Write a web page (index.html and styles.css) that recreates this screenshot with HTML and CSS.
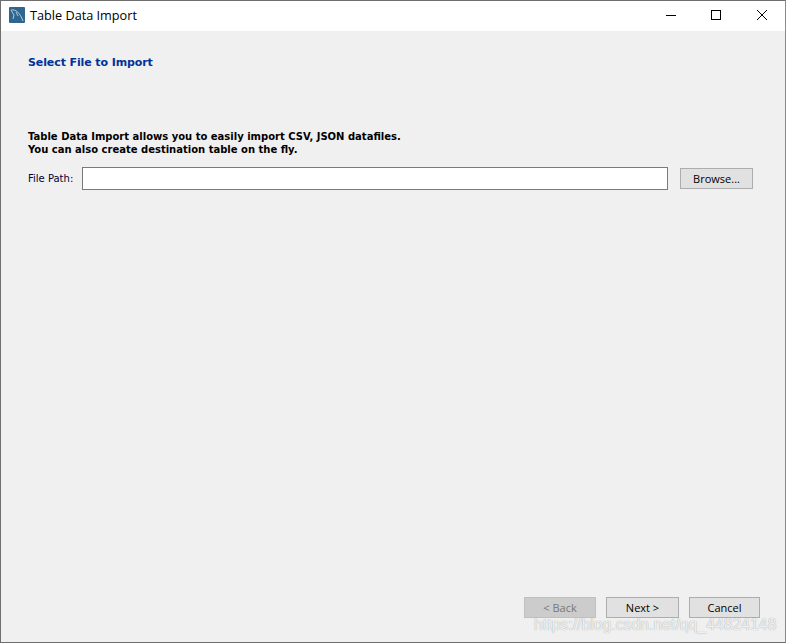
FILE: index.html
```html
<!DOCTYPE html>
<html lang="en-US">

<head>
    <meta charset="UTF-8">
    <meta name="viewport" content="width=device-width, initial-scale=1.0">
    <title>Table Data Import</title>
    <link rel="stylesheet" href="styles.css">
</head>

<body>
    <div class="window">
        <div class="titlebar">
            <svg class="app-icon" width="16" height="16" viewBox="0 0 16 16">
                <rect width="16" height="16" rx="1" fill="#2f6690" />
                <path d="M2 3 C7 2 11 6 14 14 M2 3 L5 8 L4 12 M7 5 L9 9" fill="none" stroke="#b4c8d8" stroke-width="1" />
            </svg>
            <span class="title-text">Table Data Import</span>
            <div class="window-controls">
                <svg class="control" width="46" height="30" viewBox="0 0 46 30">
                    <path d="M19 14.5 H29" stroke="#000" stroke-width="1" />
                </svg>
                <svg class="control" width="46" height="30" viewBox="0 0 46 30">
                    <rect x="18.5" y="9.5" width="9" height="9" fill="none" stroke="#000" stroke-width="1" />
                </svg>
                <svg class="control" width="46" height="30" viewBox="0 0 46 30">
                    <path d="M18 9 L28 19 M28 9 L18 19" stroke="#000" stroke-width="1" />
                </svg>
            </div>
        </div>

        <div class="content">
            <h1 class="page-title">Select File to Import</h1>
            <p class="intro">Table Data Import allows you to easily import CSV, JSON datafiles.<br>You can also create
                destination table on the fly.</p>
            <div class="file-row">
                <label class="file-label" for="filePath">File Path:</label>
                <input class="file-input" id="filePath" type="text">
                <button class="btn browse-btn">Browse...</button>
            </div>
        </div>

        <div class="footer">
            <button class="btn nav-btn back-btn" disabled>&lt; Back</button>
            <button class="btn nav-btn next-btn">Next &gt;</button>
            <button class="btn nav-btn cancel-btn">Cancel</button>
        </div>

        <div class="watermark">https://blog.csdn.net/qq_44824148</div>
    </div>
</body>

</html>
```

FILE: styles.css
```css
html,
body {
    margin: 0;
    padding: 0;
    height: 100%;
}

body {
    font-family: Tahoma, 'DejaVu Sans', sans-serif;
    font-size: 10px;
    background-color: #f0f0f0;
}

.window {
    position: relative;
    box-sizing: border-box;
    height: 643px;
    display: flex;
    flex-direction: column;
    background-color: #f0f0f0;
    border: 1px solid #6e6e6e;
    border-right-color: #8a8a8a;
    overflow: hidden;
}

.titlebar {
    flex: none;
    height: 30px;
    display: flex;
    align-items: center;
    padding-left: 8px;
    background-color: #fff;
}

.app-icon {
    flex: none;
    margin-bottom: 2px;
}

.title-text {
    margin-left: 5px;
    margin-bottom: 2px;
    font-family: 'Open Sans', sans-serif;
    font-size: 12.7px;
    color: #000;
}

.window-controls {
    margin-left: auto;
    display: flex;
}

.control {
    display: block;
}

.content {
    flex: 1;
    padding: 24px 32px 0 27px;
}

.page-title {
    margin: 0;
    font-size: 11px;
    line-height: 15px;
    font-weight: bold;
    letter-spacing: -0.1px;
    color: #003399;
}

.intro {
    margin: 60px 0 0 0;
    font-size: 10px;
    line-height: 13px;
    font-weight: bold;
    color: #000;
}

.file-row {
    display: flex;
    align-items: center;
    margin-top: 11px;
}

.file-label {
    width: 54px;
    flex: none;
    color: #000033;
    font-size: 10px;
}

.file-input {
    box-sizing: border-box;
    width: 586px;
    height: 23px;
    padding: 0 4px;
    border: 1px solid #7a7a7a;
    background-color: #fff;
    outline: none;
}

.btn {
    box-sizing: border-box;
    height: 21px;
    padding: 0;
    border: 1px solid #adadad;
    background-color: #e1e1e1;
    font-family: 'Open Sans', sans-serif;
    font-size: 11px;
    color: #000;
}

.browse-btn {
    width: 73px;
    margin-left: 12px;
}

.footer {
    flex: none;
    display: flex;
    justify-content: flex-end;
    padding: 0 25px 24px 0;
}

.nav-btn {
    margin-left: 10px;
}

.back-btn {
    width: 72px;
    background-color: #cccccc;
    border-color: #bfbfbf;
    color: #787878;
}

.next-btn {
    width: 73px;
}

.cancel-btn {
    width: 71px;
}

.watermark {
    position: absolute;
    left: 533px;
    top: 615px;
    font-family: 'Liberation Sans', sans-serif;
    font-size: 15.8px;
    color: rgba(255, 255, 255, 0.85);
    text-shadow: 0 0 1px #8f8f8f;
    white-space: nowrap;
}
```
